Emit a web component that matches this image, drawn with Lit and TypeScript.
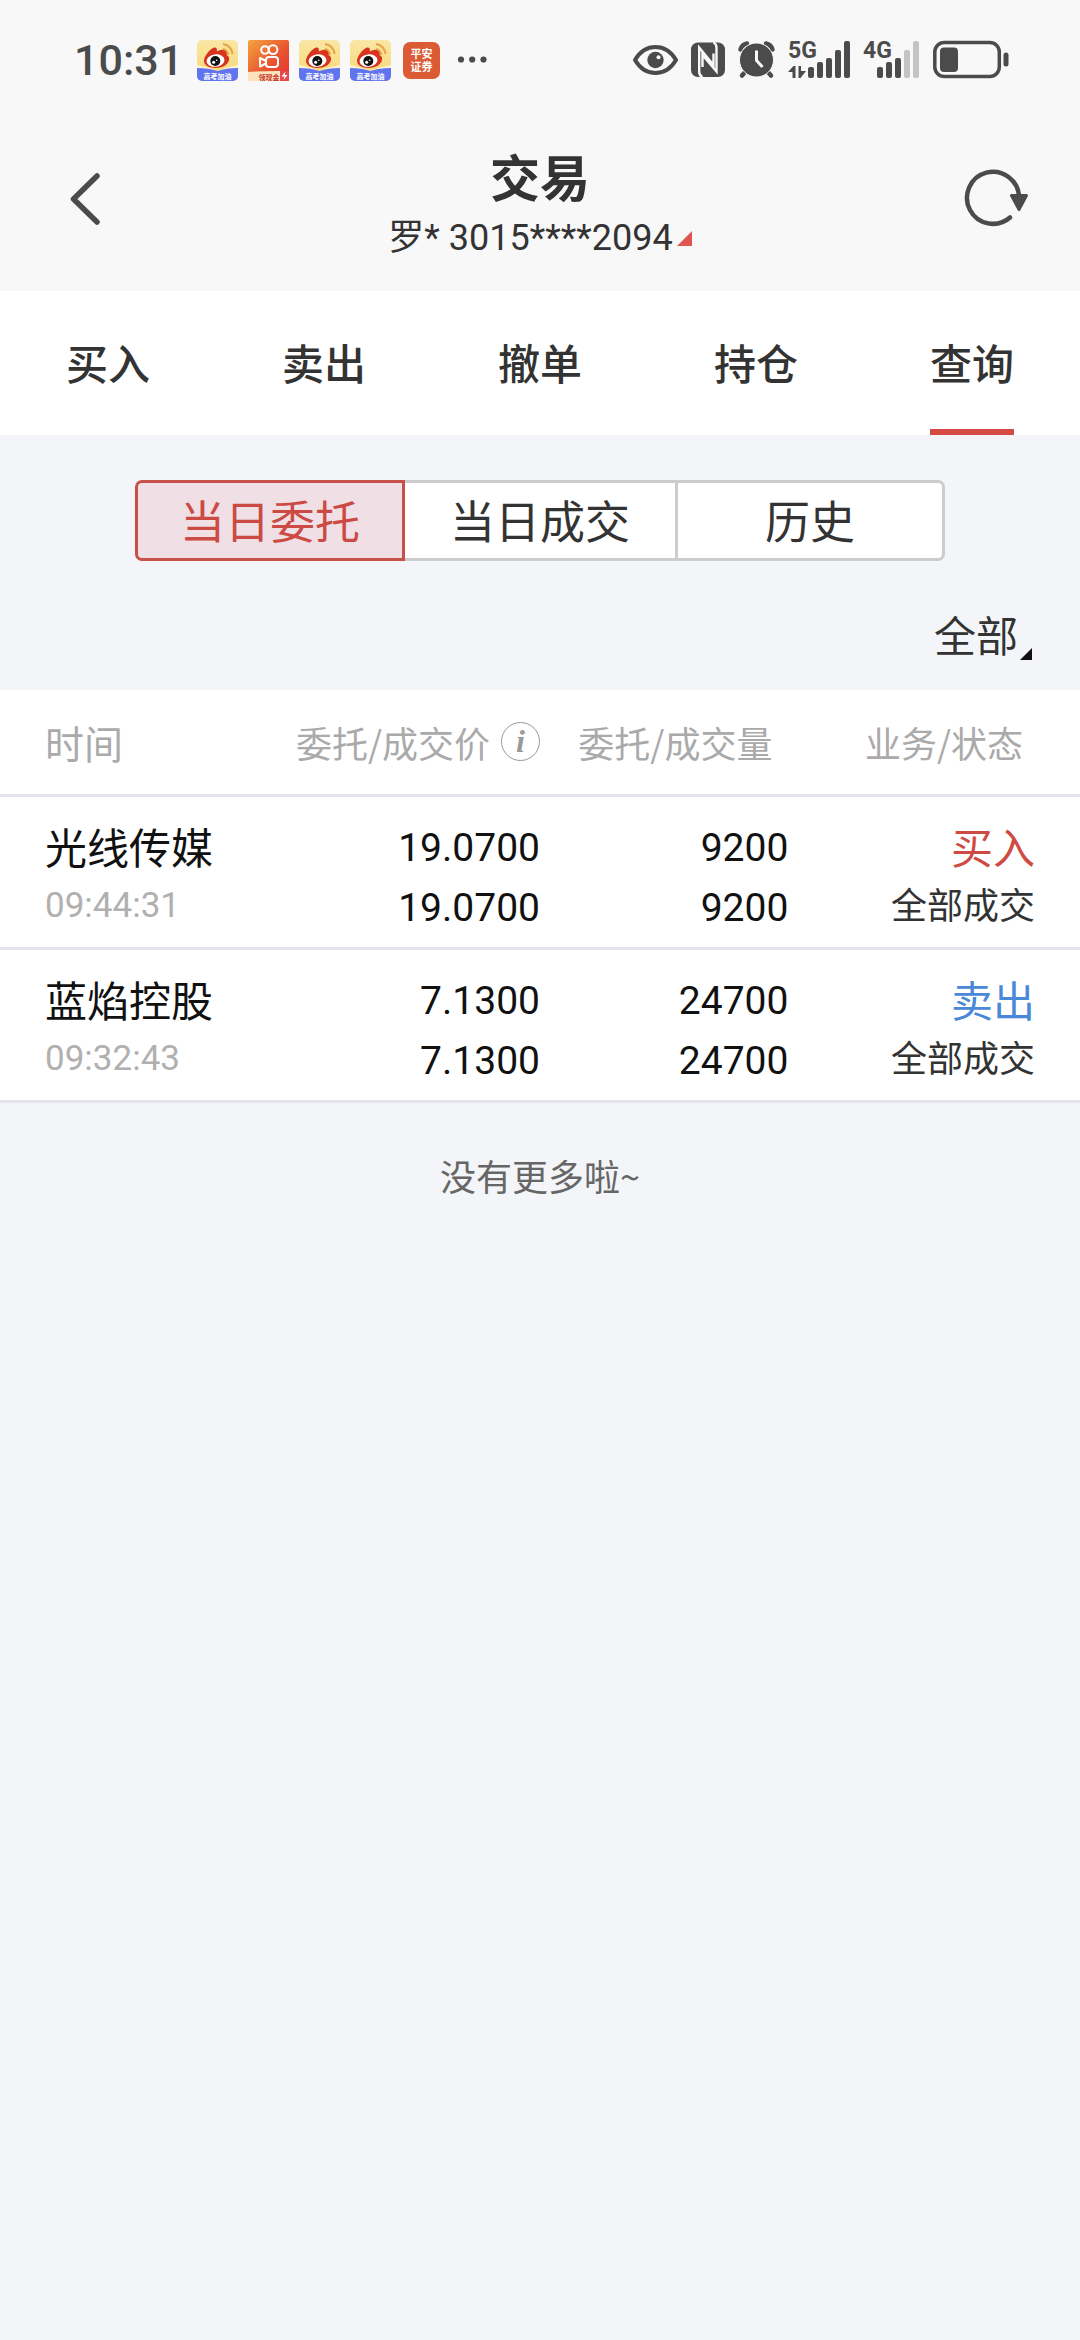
import { LitElement, html, css, svg, nothing } from "lit";
import { customElement, property, state } from "lit/decorators.js";
import { classMap } from "lit/directives/class-map.js";

interface Order {
  name: string;
  time: string;
  price: string;
  dealPrice: string;
  amount: string;
  dealAmount: string;
  side: "buy" | "sell";
  status: string;
}

const TABS = ["买入", "卖出", "撤单", "持仓", "查询"];
const RANGES = ["当日委托", "当日成交", "历史"];
const ORDERS: Order[] = [
  {
    name: "光线传媒",
    time: "09:44:31",
    price: "19.0700",
    dealPrice: "19.0700",
    amount: "9200",
    dealAmount: "9200",
    side: "buy",
    status: "全部成交",
  },
  {
    name: "蓝焰控股",
    time: "09:32:43",
    price: "7.1300",
    dealPrice: "7.1300",
    amount: "24700",
    dealAmount: "24700",
    side: "sell",
    status: "全部成交",
  },
];

const weiboIcon = html`<svg class="icon" width="41" height="41" viewBox="0 0 41 41" aria-hidden="true">
  <defs>
    <linearGradient id="sun" x1="0" y1="0" x2="0" y2="1">
      <stop offset="0" stop-color="#f9e7a6" />
      <stop offset="1" stop-color="#f8d66e" />
    </linearGradient>
    <clipPath id="tile"><rect width="41" height="41" rx="5" /></clipPath>
  </defs>
  <g clip-path="url(#tile)">
    <rect width="41" height="41" fill="url(#sun)" />
    <path d="M0 25 Q12 27 20.500 31 Q29 27 41 25 V33 H0 Z" fill="#fff3cf" />
    <path d="M0 28 Q12 28 20.500 31 Q29 28 41 28 V41 H0 Z" fill="#5f74ee" />
    <path
      d="M7 20 C8 15 13 9 17 7.500 C19.500 7 20.500 9 19.800 11.500 C23 9.500 28 9 29.500 11 C30.500 12.500 29.500 14.500 29.500 15 C32 16 32.500 18 32 20 C31 25 25 28 18.500 28 C11 28 6.500 24.500 7 20 Z"
      fill="#d9331f"
    />
    <ellipse cx="18.500" cy="20.600" rx="9" ry="6.200" fill="#fff" transform="rotate(-6 18.500 20.600)" />
    <circle cx="18.300" cy="21" r="5" fill="#111" />
    <circle cx="16.700" cy="22.300" r="1.500" fill="#fff" />
    <circle cx="19.700" cy="20.200" r=".8" fill="#fff" />
    <path d="M26 9 A6 6 0 0 1 31 15" fill="none" stroke="#e9a545" stroke-width="2" />
    <path d="M26 4.200 A10.500 10.500 0 0 1 35.500 14" fill="none" stroke="#e9a545" stroke-width="2.200" />
    <text x="20.500" y="38.500" class="tiny" font-size="7" fill="#fff" text-anchor="middle">高考加油</text>
  </g>
</svg>`;

const kuaishouIcon = html`<svg class="icon" width="41" height="41" viewBox="0 0 41 41" aria-hidden="true">
  <defs>
    <linearGradient id="flame" x1="0" y1="0" x2="1" y2="1">
      <stop offset="0" stop-color="#f3a63f" />
      <stop offset=".55" stop-color="#e9552f" />
      <stop offset="1" stop-color="#e32f33" />
    </linearGradient>
  </defs>
  <rect width="41" height="41" rx="2" fill="url(#flame)" />
  <g fill="none" stroke="#fff" stroke-width="2">
    <circle cx="17" cy="10" r="3.800" />
    <circle cx="25" cy="9.600" r="4.400" />
    <rect x="18" y="17" width="12" height="10" rx="3" />
    <path d="M18 21 L12 18 V26.500 L18 23.500" stroke-linejoin="round" />
  </g>
  <path d="M0 32 Q16 30.500 41 31 V41 H0 Z" fill="#fbe3bd" />
  <rect x="32" y="31" width="9" height="10" fill="#e5484f" />
  <path d="M37.500 31.500 L33.500 36.500 H36.500 L35.500 40 L39.500 35 H36.800 Z" fill="#fff" />
  <text x="21" y="39.500" class="tiny" font-size="7" fill="#c8322a" text-anchor="middle">领现金</text>
</svg>`;

const pinganIcon = html`<svg class="icon" width="41" height="41" viewBox="0 0 41 41" aria-hidden="true">
  <rect x="2" y="2" width="37" height="37" rx="7" fill="#db5b34" />
  <g class="tiny" font-size="11" fill="#fff" text-anchor="middle">
    <text x="20.500" y="18">平安</text>
    <text x="20.500" y="31">证券</text>
  </g>
</svg>`;

const moreIcon = html`<svg class="more" width="30" height="40" viewBox="0 0 30 40" aria-hidden="true">
  <g fill="#4b4b4b">
    <circle cx="4" cy="19.500" r="3.100" />
    <circle cx="15.200" cy="19.500" r="3.100" />
    <circle cx="26.500" cy="19.500" r="3.100" />
  </g>
</svg>`;

const eyeIcon = html`<svg width="45" height="40" viewBox="0 0 45 40" aria-hidden="true">
  <path
    d="M2 20 C7 11.500 14 7 22.500 7 C31 7 38 11.500 43 20 C38 28.500 31 33 22.500 33 C14 33 7 28.500 2 20 Z"
    fill="none" stroke="#4b4b4b" stroke-width="4" stroke-linejoin="round"
  />
  <circle cx="22.500" cy="20" r="8.200" fill="#4b4b4b" />
  <circle cx="25.500" cy="17.200" r="2" fill="#f8f8f8" />
</svg>`;

const nfcIcon = html`<svg width="34" height="40" viewBox="0 0 34 40" aria-hidden="true">
  <rect x="0" y="2.500" width="34" height="34.500" rx="7" fill="#4b4b4b" />
  <path
    d="M11.500 37 Q8.200 35.500 8.200 32 V7.500 L22.500 25 V13.500 M22.500 2.500 Q25.500 4 25.500 7.500 V31.500 L11.500 15 V27"
    fill="none" stroke="#f8f8f8" stroke-width="2.400"
  />
</svg>`;

const alarmIcon = html`<svg width="37" height="40" viewBox="0 0 37 40" aria-hidden="true">
  <g fill="none" stroke="#4b4b4b" stroke-width="4.500" stroke-linecap="round">
    <path d="M2.500 9.500 Q4 4.500 9 3.500" />
    <path d="M34.500 9.500 Q33 4.500 28 3.500" />
    <path d="M8 31 L4 35.500" />
    <path d="M29 31 L33 35.500" />
  </g>
  <circle cx="18.500" cy="20" r="17" fill="#4b4b4b" stroke="#f8f8f8" stroke-width="1" />
  <path d="M18.500 10.500 V20.500 L24.500 27" fill="none" stroke="#f8f8f8" stroke-width="3" />
</svg>`;

/* Five rising bars; the first `lit` of them are dark, the rest pale. */
const bars = (x: number, lit: number) =>
  [27, 22, 18, 10, 1].map(
    (y, i) => svg`<rect x=${x + i * 9} y=${y} width="6" height=${38 - y} rx="2" fill=${i < lit ? "#4b4b4b" : "#c4c4c4"} />`,
  );

const signal5g = html`<svg width="62" height="40" viewBox="0 0 62 40" aria-label="5G">
  <text x="0" y="18" class="net" font-size="23" fill="#4b4b4b">5G</text>
  <path d="M0 32 L5.500 26 H7.500 V38 H4.500 V32 Z M10.500 38 V26 H13 V31 H18 L12.500 38 Z" fill="#4b4b4b" />
  ${bars(20, 5)}
</svg>`;

const signal4g = html`<svg width="57" height="40" viewBox="0 0 57 40" aria-label="4G">
  <text x="0" y="18" class="net" font-size="23" fill="#4b4b4b">4G</text>
  ${bars(14, 3)}
</svg>`;

const batteryIcon = html`<svg width="76" height="40" viewBox="0 0 76 40" aria-label="电量">
  <rect x="1.800" y="2.500" width="64.500" height="34" rx="9.500" fill="none" stroke="#4b4b4b" stroke-width="3.500" />
  <rect x="7" y="7.500" width="18" height="24.500" rx="4" fill="#4b4b4b" />
  <rect x="70.500" y="12.500" width="5" height="14" rx="2.500" fill="#4b4b4b" />
</svg>`;

@customElement("status-bar")
export class StatusBar extends LitElement {
  static styles = css`
    :host {
      display: flex;
      justify-content: space-between;
      align-items: center;
      height: 120px;
      padding: 0 71px 0 74px;
      box-sizing: border-box;
      color: #4b4b4b;
    }
    .side {
      display: flex;
      align-items: center;
    }
    .left {
      gap: 10px;
    }
    .right {
      gap: 13px;
    }
    .clock {
      margin-right: 4px;
      font: 500 43px/60px Roboto, sans-serif;
    }
    .more {
      margin-left: 5px;
    }
    svg {
      display: block;
      flex: none;
      overflow: visible;
    }
    .tiny {
      font-family: "Liberation Sans", "Noto Sans CJK SC", sans-serif;
      font-weight: 700;
    }
    .net {
      font-family: "Liberation Sans Narrow", Roboto, sans-serif;
      font-weight: 700;
    }
  `;

  render() {
    return html`
      <div class="side left">
        <time class="clock">10:31</time>
        ${weiboIcon}${kuaishouIcon}${weiboIcon}${weiboIcon}${pinganIcon}${moreIcon}
      </div>
      <div class="side right">${eyeIcon}${nfcIcon}${alarmIcon}${signal5g}${signal4g}${batteryIcon}</div>
    `;
  }
}

@customElement("order-table")
export class OrderTable extends LitElement {
  @property({ attribute: false }) orders: Order[] = [];

  static styles = css`
    :host {
      display: block;
      background: #fff;
    }
    .table {
      width: 100%;
      table-layout: fixed;
      border-collapse: collapse;
      border-spacing: 0;
    }
    .c1 {
      width: 25%;
    }
    .c2 {
      width: 25%;
    }
    .c3 {
      width: 23%;
    }
    .c4 {
      width: 27%;
    }
    th,
    td {
      padding: 0;
      text-align: right;
      vertical-align: top;
      white-space: nowrap;
      border-bottom: 3px solid #e4e4ea;
    }
    th {
      height: 105px;
      box-sizing: border-box;
      vertical-align: middle;
      font-weight: 400;
      font-size: 36px;
      line-height: 54px;
      color: #aaa;
    }
    .first {
      padding-left: 45px;
      text-align: left;
    }
    th.first {
      font-size: 39px;
    }
    th.amount {
      padding-right: 16px;
    }
    th.state {
      padding-right: 57px;
    }
    td {
      padding-top: 19px;
      padding-bottom: 9px;
      line-height: 60px;
      color: #111;
    }
    td.figures {
      padding-top: 21px;
    }
    td.state {
      padding-right: 45px;
    }
    .heading {
      display: flex;
      justify-content: flex-end;
      align-items: center;
      gap: 11px;
    }
    .info {
      width: 39px;
      height: 39px;
      box-sizing: border-box;
      padding: 0;
      border: 1px solid #999;
      border-radius: 50%;
      background: none;
      color: #999;
      font: italic 700 32px/35px "Liberation Serif", serif;
    }
    .line {
      display: block;
    }
    .name,
    .side {
      font-size: 42px;
    }
    .num {
      font: 400 39px/60px Roboto, sans-serif;
    }
    .time {
      font: 400 35px/60px Roboto, sans-serif;
      color: #b0b0b0;
    }
    .buy {
      color: #cf4a43;
    }
    .sell {
      color: #4a88d8;
    }
    .status {
      font-size: 36px;
      line-height: 54px;
      color: #333;
    }
  `;

  render() {
    return html`
      <table class="table">
        <colgroup>
          <col class="c1" />
          <col class="c2" />
          <col class="c3" />
          <col class="c4" />
        </colgroup>
        <thead>
          <tr>
            <th scope="col" class="first">时间</th>
            <th scope="col">
              <span class="heading">委托/成交价<button class="info" aria-label="价格说明">i</button></span>
            </th>
            <th scope="col" class="amount">委托/成交量</th>
            <th scope="col" class="state">业务/状态</th>
          </tr>
        </thead>
        <tbody>
          ${this.orders.map(
            (o) => html`<tr>
              <td class="first">
                <span class="line name">${o.name}</span>
                <time class="line time">${o.time}</time>
              </td>
              <td class="figures">
                <span class="line num">${o.price}</span>
                <span class="line num">${o.dealPrice}</span>
              </td>
              <td class="figures">
                <span class="line num">${o.amount}</span>
                <span class="line num">${o.dealAmount}</span>
              </td>
              <td class="state">
                <span class="line side ${o.side}">${o.side === "buy" ? "买入" : "卖出"}</span>
                <span class="line status">${o.status}</span>
              </td>
            </tr>`,
          )}
        </tbody>
      </table>
    `;
  }
}

@customElement("app-root")
export class AppRoot extends LitElement {
  @state() private tab = 4;
  @state() private range = 0;

  static styles = css`
    :host {
      display: block;
      min-height: 100vh;
      background: #f4f5f9;
      color: #333;
      font-family: "Noto Sans CJK SC", sans-serif;
    }
    button,
    select {
      margin: 0;
      padding: 0;
      border: 0;
      background: none;
      color: inherit;
      font: inherit;
    }
    .top {
      background: #f8f8f8;
    }
    .bar {
      display: grid;
      grid-template-columns: 1fr auto 1fr;
      align-items: start;
      padding: 26px 48px 21px;
    }
    .action {
      display: flex;
      align-items: center;
      height: 106px;
    }
    .back {
      padding-left: 18px;
    }
    .refresh {
      justify-self: end;
    }
    .heading {
      display: flex;
      flex-direction: column;
      align-items: center;
      gap: 2px;
    }
    .title {
      margin: 0;
      font-size: 50px;
      font-weight: 700;
      line-height: 58px;
    }
    .account {
      display: flex;
      align-items: center;
      gap: 4px;
      font: 400 36px/64px Roboto, "Noto Sans CJK SC", sans-serif;
    }
    .tabs {
      display: grid;
      grid-template-columns: repeat(5, 1fr);
      background: #fff;
    }
    .tab {
      display: flex;
      justify-content: center;
      font-size: 42px;
      font-weight: 500;
      line-height: 60px;
    }
    .label {
      padding: 41px 0 37px;
      border-bottom: 6px solid transparent;
    }
    .tab.on .label {
      border-color: #d54a43;
    }
    .ranges {
      display: grid;
      grid-template-columns: repeat(3, 1fr);
      width: 75%;
      margin: 45px auto 0;
    }
    .range {
      padding-bottom: 2px;
      border: 3px solid #ccc;
      border-right-width: 0;
      background: #fff;
      font-size: 45px;
      line-height: 73px;
    }
    .range:nth-child(2):not(.on) {
      border-left-width: 0;
    }
    .range:first-child {
      border-radius: 7px 0 0 7px;
    }
    .range:last-child {
      border-right-width: 3px;
      border-radius: 0 7px 7px 0;
    }
    .range.on {
      border: 3px solid #c8504a;
      background: #f0e0e5;
      color: #cc4a44;
    }
    .filter {
      display: flex;
      justify-content: flex-end;
      align-items: flex-end;
      gap: 1px;
      padding: 47px 48px 30px 0;
    }
    .select {
      appearance: none;
      height: 52px;
      font-size: 42px;
      line-height: 52px;
    }
    .end {
      margin: 0;
      padding: 42px 0;
      text-align: center;
      font-size: 36px;
      line-height: 60px;
      color: #666;
    }
    svg {
      display: block;
    }
  `;

  render() {
    return html`
      <header class="top">
        <status-bar></status-bar>
        <div class="bar">
          <button class="action back" aria-label="返回">
            <svg width="40" height="60" viewBox="0 0 40 60">
              <path d="M31 7 L7.500 30 L31 53" fill="none" stroke="#4b4b4b" stroke-width="5.500"
                stroke-linecap="round" stroke-linejoin="round" />
            </svg>
          </button>
          <div class="heading">
            <h1 class="title">交易</h1>
            <button class="account" aria-haspopup="listbox">
              <span>罗* 3015****2094</span>
              <svg width="15" height="15" viewBox="0 0 15 15"><path d="M15 0 V15 H0 Z" fill="#df5650" /></svg>
            </button>
          </div>
          <button class="action refresh" aria-label="刷新">
            <svg width="68" height="64" viewBox="0 0 68 64">
              <path d="M46 50.500 A26 26 0 1 1 55 30" fill="none" stroke="#4b4b4b" stroke-width="4.500" stroke-linecap="round" />
              <path d="M47.500 28.500 H62.500 L55 42.500 Z" fill="#4b4b4b" stroke="#4b4b4b" stroke-width="3" stroke-linejoin="round" />
            </svg>
          </button>
        </div>
      </header>
      <nav class="tabs">
        ${TABS.map(
          (t, i) => html`<button
            class=${classMap({ tab: true, on: i === this.tab })}
            aria-current=${i === this.tab ? "page" : nothing}
            @click=${() => (this.tab = i)}
          ><span class="label">${t}</span></button>`,
        )}
      </nav>
      <main>
        <div class="ranges">
          ${RANGES.map(
            (r, i) => html`<button
              class=${classMap({ range: true, on: i === this.range })}
              aria-pressed=${i === this.range ? "true" : "false"}
              @click=${() => (this.range = i)}
            >${r}</button>`,
          )}
        </div>
        <div class="filter">
          <select class="select" aria-label="筛选">
            <option>全部</option>
          </select>
          <svg width="12" height="12" viewBox="0 0 12 12" aria-hidden="true"><path d="M12 0 V12 H0 Z" fill="#111" /></svg>
        </div>
        <order-table .orders=${ORDERS}></order-table>
        <p class="end">没有更多啦~</p>
      </main>
    `;
  }
}
